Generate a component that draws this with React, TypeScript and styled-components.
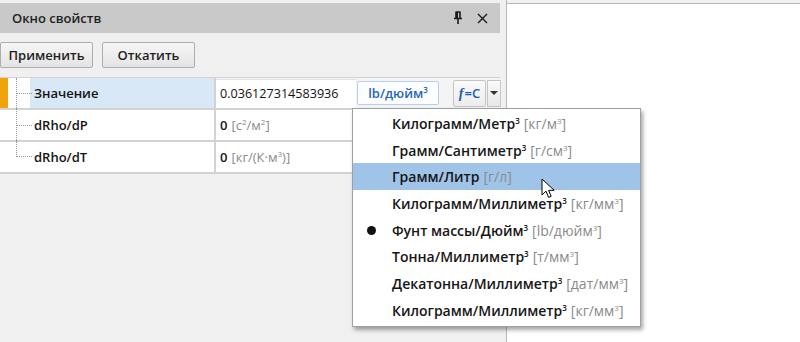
import styled, { createGlobalStyle } from 'styled-components';

const GlobalStyle = createGlobalStyle`
  html, body {
    margin: 0;
    padding: 0;
    background: #f0f0f0;
  }
  body {
    font-family: 'Open Sans', 'Noto Sans', sans-serif;
    color: #1a1a1a;
  }
`;

const Screen = styled.div`
  position: relative;
  width: 800px;
  height: 342px;
  display: flex;
  overflow: hidden;
  background: #f0f0f0;
`;

const LeftPanel = styled.div`
  width: 500px;
  padding-top: 3px;
  display: flex;
  flex-direction: column;
`;

const TitleBar = styled.div`
  height: 30px;
  background: #c9c9c9;
  display: flex;
  align-items: center;
  padding: 0 12px;
  gap: 14px;
`;

const Title = styled.div`
  flex: 1;
  font-size: 13px;
  font-weight: 600;
  color: #1e1e1e;
`;

const TitleIcon = styled.svg`
  display: block;
`;

const Toolbar = styled.div`
  display: flex;
  gap: 9px;
  padding: 9px 0;
`;

const Button = styled.button`
  width: 93px;
  height: 26px;
  padding: 0;
  border: 1px solid #adadad;
  border-radius: 2px;
  background: linear-gradient(#f6f6f6, #e4e4e4);
  font-family: inherit;
  font-size: 13px;
  font-weight: 600;
  color: #1e1e1e;
`;

const Grid = styled.div`
  display: flex;
  flex-direction: column;
  border-top: 1px solid #d2d2d2;
`;

const Row = styled.div`
  display: grid;
  grid-template-columns: 216px 1fr;
  height: 30px;
  background: #fff;
  border-bottom: 2px solid #d2d2d2;
`;

const LabelCell = styled.div`
  display: flex;
  border-right: 2px solid #d2d2d2;
`;

const Gutter = styled.div<{ $active?: boolean; $last?: boolean }>`
  position: relative;
  width: 30px;
  flex: none;
  background: #fff;

  &::before {
    content: '';
    position: absolute;
    left: 0;
    top: 0;
    width: 8px;
    height: 100%;
    background: ${({ $active }) => ($active ? '#f0a30a' : 'transparent')};
  }

  &::after {
    content: '';
    position: absolute;
    left: 16px;
    top: ${({ $active }) => ($active ? '0' : '-2px')};
    width: 16px;
    height: ${({ $last, $active }) => ($last ? '17px' : $active ? '32px' : '34px')};
    border-left: 1px dotted #9a9a9a;
    box-sizing: border-box;
    background: linear-gradient(to right, #9a9a9a 50%, transparent 50%) repeat-x;
    background-size: 2px 1px;
    background-position: 0 ${({ $last, $active }) => ($last ? '16px' : $active ? '15px' : '17px')};
  }
`;

const Label = styled.div<{ $active?: boolean }>`
  flex: 1;
  display: flex;
  align-items: center;
  padding-left: 4px;
  background: ${({ $active }) => ($active ? '#d8e8f6' : '#fff')};
  font-size: 13px;
  font-weight: 600;
  color: #141414;
`;

const ValueCell = styled.div`
  display: flex;
  align-items: center;
  padding-left: 4px;
  font-size: 13px;
  font-weight: 600;
  color: #141414;
`;

const EditorCell = styled.div`
  display: flex;
  align-items: center;
  background: #f4f4f4;
  padding-right: 1px;
`;

const EditorText = styled.div`
  width: 136px;
  height: 28px;
  display: flex;
  align-items: center;
  padding-left: 4px;
  background: #fff;
  border-top: 1px solid #e2e2e2;
  font-size: 12.6px;
  color: #141414;
`;

const UnitBox = styled.div`
  width: 80px;
  height: 22px;
  margin-left: 1px;
  display: flex;
  align-items: center;
  justify-content: center;
  border: 1px solid #b4d0ec;
  border-radius: 2px;
  background: #fbfdff;
  font-size: 13px;
  font-weight: 600;
  color: #2766b8;
`;

const FormulaButton = styled.div`
  width: 31px;
  height: 25px;
  margin-left: 14px;
  display: flex;
  align-items: center;
  justify-content: center;
  border: 1px solid #c4c4c4;
  border-radius: 2px;
  background: linear-gradient(#fafafa, #ececec);
  font-size: 13px;
  font-weight: 600;
  color: #1b5cb6;

  i {
    font-family: 'Liberation Serif', serif;
    font-weight: 700;
    font-size: 14px;
    margin-right: 1px;
  }
`;

const ArrowButton = styled.div`
  width: 12px;
  height: 25px;
  margin-left: 1px;
  display: flex;
  align-items: center;
  justify-content: center;
  border: 1px solid #c4c4c4;
  background: linear-gradient(#fafafa, #e8e8e8);

  &::after {
    content: '';
    border-left: 4px solid transparent;
    border-right: 4px solid transparent;
    border-top: 4px solid #333;
  }
`;

const Unit = styled.span`
  font-weight: 400;
  color: #8a8a8a;
  margin-left: 4px;
`;

const Sup = styled.sup`
  font-size: 8px;
  line-height: 0;
  vertical-align: 5px;
`;

const Splitter = styled.div`
  width: 6px;
  flex: none;
  border-right: 1px solid #b9b9b9;
`;

const RightPane = styled.div`
  flex: 1;
  margin-top: 3px;
  background: #fff;
  border-top: 1px solid #b9b9b9;
`;

const Dropdown = styled.div`
  position: absolute;
  left: 352px;
  top: 108px;
  width: 287px;
  padding: 1px 0 2px;
  background: #fff;
  border: 1px solid #a0a0a0;
  box-shadow: 2px 3px 4px rgba(0, 0, 0, 0.35);
`;

const Item = styled.div<{ $hover?: boolean }>`
  position: relative;
  height: 26.7px;
  display: flex;
  align-items: center;
  padding-left: 39px;
  background: ${({ $hover }) => ($hover ? '#9fc4e8' : 'transparent')};
  font-size: 14px;
  font-weight: 600;
  color: #161616;
  white-space: nowrap;
`;

const Bullet = styled.span`
  position: absolute;
  left: 14px;
  top: 50%;
  width: 9px;
  height: 9px;
  margin-top: -4px;
  border-radius: 50%;
  background: #111;
`;

const Cursor = styled.svg`
  position: absolute;
  left: 541px;
  top: 178px;
`;

const units = [
  { name: 'Килограмм/Метр', cube: true, unit: <>кг/м<Sup>3</Sup></> },
  { name: 'Грамм/Сантиметр', cube: true, unit: <>г/см<Sup>3</Sup></> },
  { name: 'Грамм/Литр', cube: false, unit: <>г/л</>, hover: true },
  { name: 'Килограмм/Миллиметр', cube: true, unit: <>кг/мм<Sup>3</Sup></> },
  { name: 'Фунт массы/Дюйм', cube: true, unit: <>lb/дюйм<Sup>3</Sup></>, checked: true },
  { name: 'Тонна/Миллиметр', cube: true, unit: <>т/мм<Sup>3</Sup></> },
  { name: 'Декатонна/Миллиметр', cube: true, unit: <>дат/мм<Sup>3</Sup></> },
  { name: 'Килограмм/Миллиметр', cube: true, unit: <>кг/мм<Sup>3</Sup></> },
];

export default function App() {
  return (
    <>
      <GlobalStyle />
      <Screen>
        <LeftPanel>
          <TitleBar>
            <Title>Окно свойств</Title>
            <TitleIcon width="10" height="14" viewBox="0 0 10 14">
              <path d="M2.5 1h5M3 1v6M7 1v6M1 7.5h8M5 8v5" stroke="#1a1a1a" strokeWidth="1.6" fill="none" />
              <rect x="3" y="1" width="2" height="6" fill="#1a1a1a" />
            </TitleIcon>
            <TitleIcon width="11" height="11" viewBox="0 0 11 11">
              <path d="M1 1l9 9M10 1l-9 9" stroke="#1a1a1a" strokeWidth="1.4" />
            </TitleIcon>
          </TitleBar>
          <Toolbar>
            <Button>Применить</Button>
            <Button>Откатить</Button>
          </Toolbar>
          <Grid>
            <Row>
              <LabelCell>
                <Gutter $active />
                <Label $active>Значение</Label>
              </LabelCell>
              <EditorCell>
                <EditorText>0.036127314583936</EditorText>
                <UnitBox>
                  <span>
                    lb/дюйм<Sup>3</Sup>
                  </span>
                </UnitBox>
                <FormulaButton>
                  <span>
                    <i>f</i>=C
                  </span>
                </FormulaButton>
                <ArrowButton />
              </EditorCell>
            </Row>
            <Row>
              <LabelCell>
                <Gutter />
                <Label>dRho/dP</Label>
              </LabelCell>
              <ValueCell>
                0
                <Unit>
                  [с<Sup>2</Sup>/м<Sup>2</Sup>]
                </Unit>
              </ValueCell>
            </Row>
            <Row>
              <LabelCell>
                <Gutter $last />
                <Label>dRho/dT</Label>
              </LabelCell>
              <ValueCell>
                0
                <Unit>
                  [кг/(К·м<Sup>3</Sup>)]
                </Unit>
              </ValueCell>
            </Row>
          </Grid>
        </LeftPanel>
        <Splitter />
        <RightPane />

        <Dropdown>
          {units.map((u, i) => (
            <Item key={i} $hover={u.hover}>
              {u.checked && <Bullet />}
              <span>
                {u.name}
                {u.cube && <Sup>3</Sup>}
                <Unit>[{u.unit}]</Unit>
              </span>
            </Item>
          ))}
        </Dropdown>
        <Cursor width="16" height="22" viewBox="0 0 16 22">
          <path
            d="M1 1v16l4-3.8 2.6 6.2 2.6-1.1-2.6-6h5.6z"
            fill="#fff"
            stroke="#000"
            strokeWidth="1"
            strokeLinejoin="round"
          />
        </Cursor>
      </Screen>
    </>
  );
}
